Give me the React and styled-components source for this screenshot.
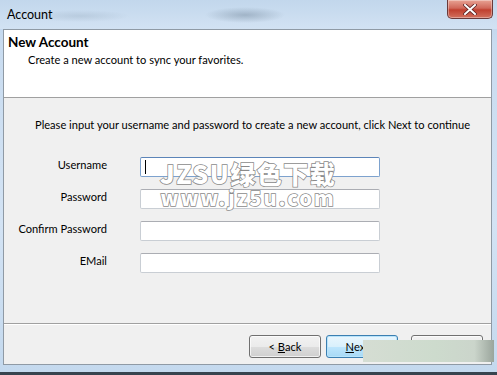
import React from 'react';
import styled, { createGlobalStyle } from 'styled-components';

const GlobalStyle = createGlobalStyle`
  html, body {
    margin: 0;
    padding: 0;
    width: 497px;
    height: 375px;
    overflow: hidden;
    background: #2f3a44;
  }
  body {
    font-family: Lato, "Noto Sans", sans-serif;
    font-size: 11.1px;
    color: #000;
  }
`;

const Window = styled.div`
  position: relative;
  width: 497px;
  height: 372px;
  display: flex;
  flex-direction: column;
  background: linear-gradient(180deg, #b9d1ea 0%, #c9dcf0 12%, #d3e3f4 60%, #c4d9ee 100%);
  box-sizing: border-box;
`;

const TitleBar = styled.div`
  height: 29px;
  display: flex;
  align-items: flex-start;
  justify-content: space-between;
  background:
    radial-gradient(ellipse 40px 8px at 245px 15px, rgba(110,130,150,0.45), transparent),
    radial-gradient(ellipse 50px 6px at 80px 16px, rgba(150,170,190,0.35), transparent),
    linear-gradient(180deg, #c2d7ec 0%, #d2e2f3 100%);
`;

const Title = styled.span`
  margin: 7px 0 0 7px;
  font-size: 12.5px;
  color: #000;
`;

const CloseButton = styled.div`
  width: 44px;
  height: 18px;
  margin-right: 4px;
  display: flex;
  align-items: center;
  justify-content: center;
  border: 1px solid #6a3a3a;
  border-top: none;
  border-radius: 0 0 5px 5px;
  background: linear-gradient(180deg, #e8a394 0%, #d0685a 45%, #c0402f 55%, #d2715e 100%);
  box-shadow: inset 0 0 0 1px rgba(255,255,255,0.35);
`;

const Client = styled.div`
  flex: 1;
  margin: 0 5px 7px 3px;
  display: flex;
  flex-direction: column;
  border: 1px solid #8f9aa5;
  background: #f0f0f0;
`;

const Header = styled.div`
  height: 68px;
  background: #fff;
  border-bottom: 1px solid #a0a0a0;
  padding: 4px 0 0 4px;
  box-sizing: border-box;
`;

const HeaderTitle = styled.div`
  font-weight: bold;
  font-size: 13.5px;
  line-height: 17px;
`;

const HeaderText = styled.div`
  margin: 1px 0 0 20px;
  line-height: 16px;
`;

const Body = styled.div`
  flex: 1;
  padding-top: 19px;
  border-bottom: 1px solid #a0a0a0;
  position: relative;
`;

const Instruction = styled.div`
  padding-left: 31px;
  line-height: 16px;
  white-space: nowrap;
`;

const Form = styled.div`
  margin-top: 24px;
  display: grid;
  grid-template-columns: 103px 240px;
  column-gap: 33px;
  row-gap: 12px;
  align-items: center;
`;

const Label = styled.div`
  text-align: right;
  line-height: 16px;
  margin-top: -5px;
`;

const Field = styled.div`
  height: 20px;
  box-sizing: border-box;
  border: 1px solid ${p => (p.focused ? '#7da2ce' : '#c9ced4')};
  border-top-color: ${p => (p.focused ? '#5c84b8' : '#abadb3')};
  border-radius: 2px;
  background: #fff;
  display: flex;
  align-items: center;
  padding-left: 4px;
`;

const Caret = styled.span`
  width: 1px;
  height: 14px;
  background: #000;
`;

const Footer = styled.div`
  height: 40px;
  border-top: 1px solid #fff;
  display: flex;
  justify-content: flex-end;
  align-items: flex-start;
  padding: 10px 8px 0 0;
  box-sizing: border-box;
`;

const Button = styled.div`
  width: 72px;
  height: 23px;
  box-sizing: border-box;
  margin-left: ${p => p.gap || 0}px;
  display: flex;
  align-items: center;
  justify-content: center;
  border: 1px solid ${p => (p.primary ? '#3c7fb1' : '#707070')};
  border-radius: 3px;
  background: ${p =>
    p.primary
      ? 'linear-gradient(180deg, #eaf6fd 0%, #d9f0fc 50%, #bee6fd 51%, #a7d9f5 100%)'
      : 'linear-gradient(180deg, #f2f2f2 0%, #ebebeb 50%, #dddddd 51%, #cfcfcf 100%)'};
  box-shadow: inset 0 0 0 1px ${p => (p.primary ? '#b8e4fb' : 'rgba(255,255,255,0.7)')};
`;

const Key = styled.span`
  text-decoration: underline;
`;

const Watermark = styled.div`
  position: absolute;
  left: 160px;
  top: 160px;
  display: flex;
  flex-direction: column;
  align-items: center;
  pointer-events: none;
`;

const WatermarkLine = styled.div`
  font-family: "Noto Sans CJK SC", "Liberation Sans", sans-serif;
  font-weight: 900;
  font-size: ${p => p.size}px;
  line-height: ${p => p.size + 2}px;
  letter-spacing: ${p => p.spacing}px;
  color: #fff;
  -webkit-text-stroke: 1.5px #8a8a8a;
  paint-order: stroke fill;
`;

const Smudge = styled.div`
  position: absolute;
  left: 363px;
  top: 340px;
  width: 131px;
  height: 22px;
  background: linear-gradient(90deg, #d5ddd3 0%, #cddbcd 55%, #cbd5cb 85%, #9aa59c 100%);
`;

const Taskbar = styled.div`
  height: 3px;
  background: #37434e;
`;

export default function App() {
  return (
    <>
      <GlobalStyle />
      <Window>
        <TitleBar>
          <Title>Account</Title>
          <CloseButton>
            <svg width="14" height="11" viewBox="0 0 14 11">
              <path d="M2 1 L12 10 M12 1 L2 10" stroke="#5a2020" strokeWidth="3.6" strokeLinecap="square" />
              <path d="M2 1 L12 10 M12 1 L2 10" stroke="#fff" strokeWidth="2" strokeLinecap="square" />
            </svg>
          </CloseButton>
        </TitleBar>
        <Client>
          <Header>
            <HeaderTitle>New Account</HeaderTitle>
            <HeaderText>Create a new account to sync your favorites.</HeaderText>
          </Header>
          <Body>
            <Instruction>
              Please input your username and password to create a new account, click Next to continue
            </Instruction>
            <Form>
              <Label>Username</Label>
              <Field focused>
                <Caret />
              </Field>
              <Label>Password</Label>
              <Field />
              <Label>Confirm Password</Label>
              <Field />
              <Label>EMail</Label>
              <Field />
            </Form>
          </Body>
          <Footer>
            <Button>
              &lt;&nbsp;<Key>B</Key>ack
            </Button>
            <Button primary gap={5}>
              <Key>N</Key>ext&nbsp;&gt;
            </Button>
            <Button gap={13}>Cancel</Button>
          </Footer>
        </Client>
        <Watermark>
          <WatermarkLine size={25} spacing={1.5}>JZSU绿色下载</WatermarkLine>
          <WatermarkLine size={20} spacing={2}>www.jz5u.com</WatermarkLine>
        </Watermark>
        <Smudge />
      </Window>
      <Taskbar />
    </>
  );
}
